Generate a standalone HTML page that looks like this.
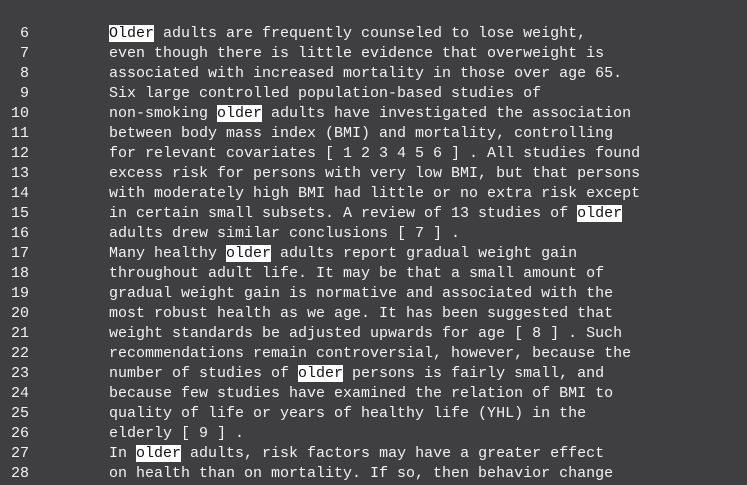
<!DOCTYPE html>
<html><head><style>
html,body{margin:0;padding:0;background:#3f3e41;width:747px;height:485px;overflow:hidden}
.c{position:absolute;top:24px;left:0;font-family:"Liberation Mono",monospace;font-size:15px;line-height:20px;color:#f2f2f2}
.n,.t{position:absolute;top:0;white-space:pre}
.n{left:0;width:29px;text-align:right}
.t{left:109px}
.h{background:#fff;color:#111}
</style></head><body>
<div class="c"><div class="n">6
7
8
9
10
11
12
13
14
15
16
17
18
19
20
21
22
23
24
25
26
27
28</div><div class="t"><span class="h">Older</span> adults are frequently counseled to lose weight,
even though there is little evidence that overweight is
associated with increased mortality in those over age 65.
Six large controlled population-based studies of
non-smoking <span class="h">older</span> adults have investigated the association
between body mass index (BMI) and mortality, controlling
for relevant covariates [ 1 2 3 4 5 6 ] . All studies found
excess risk for persons with very low BMI, but that persons
with moderately high BMI had little or no extra risk except
in certain small subsets. A review of 13 studies of <span class="h">older</span>
adults drew similar conclusions [ 7 ] .
Many healthy <span class="h">older</span> adults report gradual weight gain
throughout adult life. It may be that a small amount of
gradual weight gain is normative and associated with the
most robust health as we age. It has been suggested that
weight standards be adjusted upwards for age [ 8 ] . Such
recommendations remain controversial, however, because the
number of studies of <span class="h">older</span> persons is fairly small, and
because few studies have examined the relation of BMI to
quality of life or years of healthy life (YHL) in the
elderly [ 9 ] .
In <span class="h">older</span> adults, risk factors may have a greater effect
on health than on mortality. If so, then behavior change</div></div>
</body></html>
